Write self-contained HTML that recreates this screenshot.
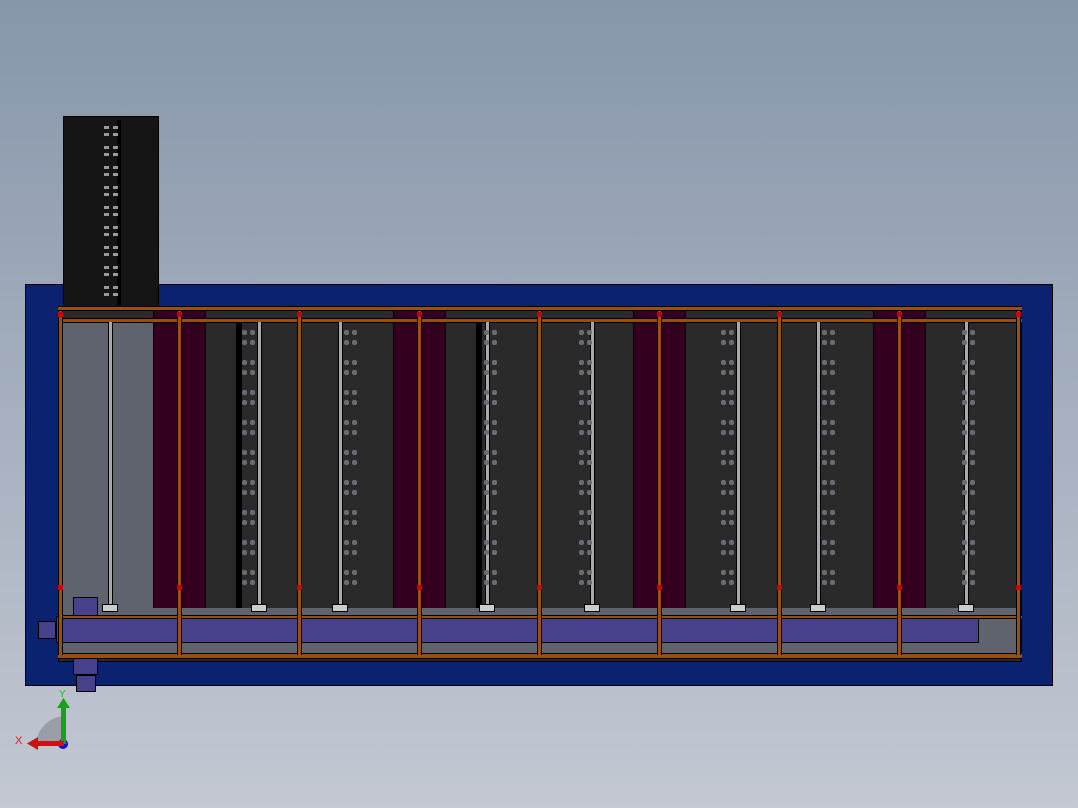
<!DOCTYPE html>
<html><head><meta charset="utf-8"><style>
body{margin:0;width:1078px;height:808px;overflow:hidden;background:linear-gradient(#8796ab,#c3c8d2);position:relative;font-family:"Liberation Sans",sans-serif}
div{position:absolute;box-sizing:border-box}
.post{width:5px;background:#9a4e10;border-left:1px solid #000;border-right:1px solid #000}
.rail{height:5px;background:#9a4e10;border-top:1px solid #000;border-bottom:1px solid #000}
.m{background:#330020;border-left:1px solid #000;border-right:1px solid #000}
.g{width:5px;background:#aaa;border-left:1px solid #000;border-right:1px solid #000}
.d{width:5px;height:5px;background:#6a6c72;border-radius:2px}
</style></head><body>
<div style="left:25px;top:284px;width:1028px;height:402px;background:#0b2270;border:1px solid #000"></div>
<div style="left:63px;top:116px;width:96px;height:192px;background:#151515;border:1px solid #000"></div>
<div style="left:117px;top:120px;width:4px;height:186px;background:#000"></div>
<div style="left:58px;top:306px;width:964px;height:356px;background:#2a2a2a;border:1px solid #000"></div>
<div style="left:60px;top:320px;width:93px;height:296px;background:#5f636d"></div>
<div class="m" style="left:153px;top:310px;width:53px;height:306px"></div>
<div class="m" style="left:393px;top:310px;width:53px;height:306px"></div>
<div class="m" style="left:633px;top:310px;width:53px;height:306px"></div>
<div class="m" style="left:873px;top:310px;width:53px;height:306px"></div>
<div style="left:236px;top:320px;width:6px;height:290px;background:#000"></div>
<div style="left:476px;top:320px;width:6px;height:290px;background:#000"></div>
<div style="left:60px;top:608px;width:960px;height:9px;background:#5f636d"></div>
<div style="left:60px;top:642px;width:960px;height:12px;background:#5f636d"></div>
<div style="left:978px;top:617px;width:42px;height:25px;background:#5f636d"></div>
<div style="left:56px;top:616px;width:923px;height:27px;background:#46418a;border:1px solid #000"></div>
<div style="left:38px;top:621px;width:18px;height:18px;background:#46418a;border:1px solid #000"></div>
<div style="left:73px;top:597px;width:25px;height:22px;background:#46418a;border:1px solid #000"></div>
<div style="left:73px;top:657px;width:25px;height:18px;background:#46418a;border:1px solid #000"></div>
<div style="left:76px;top:675px;width:20px;height:17px;background:#46418a;border:1px solid #000"></div>
<div class="rail" style="left:58px;top:306px;width:964px"></div>
<div class="rail" style="left:58px;top:318px;width:964px"></div>
<div class="rail" style="left:58px;top:615px;width:964px;height:4px"></div>
<div class="rail" style="left:58px;top:653px;width:964px;height:6px"></div>
<div id="c"></div>
<svg style="position:absolute;left:14px;top:686px" width="60" height="70">
<path d="M22 58 A30 30 0 0 1 50 30 L50 58Z" fill="#9a9ea6"/>
<circle cx="49" cy="58" r="5" fill="#1010d0"/>
<rect x="47" y="20" width="5" height="38" fill="#18a018"/>
<path d="M43 22 L49.5 12 L56 22Z" fill="#18a018"/>
<rect x="24" y="55" width="26" height="5" fill="#d01010"/>
<path d="M24 51 L13 57.5 L24 64Z" fill="#d01010"/>
<text x="45" y="11" font-size="10" fill="#20c020" font-family="Liberation Sans">Y</text>
<text x="1" y="58" font-size="11" fill="#d02020" font-family="Liberation Sans">X</text>
</svg>
<script>
var c=document.getElementById('c'),h='';
[59,178,298,418,538,658,778,898,1017].forEach(function(x){h+='<div class="post" style="left:'+(x-1)+'px;top:311px;height:344px"></div>';h+='<div style="left:'+(x-1)+'px;top:312px;width:5px;height:5px;background:#c00"></div><div style="left:'+(x-1)+'px;top:585px;width:5px;height:5px;background:#c00"></div>';});
[110,259,340,487,592,738,818,966].forEach(function(x){h+='<div class="g" style="left:'+(x-2)+'px;top:322px;height:288px"></div>';h+='<div style="left:'+(x-8)+'px;top:604px;width:16px;height:8px;background:#ccc;border:1px solid #000"></div>';});
[248,350,490,585,727,828,968].forEach(function(x){for(var y=330;y<600;y+=30){h+='<div class="d" style="left:'+(x-6)+'px;top:'+y+'px"></div><div class="d" style="left:'+(x+2)+'px;top:'+y+'px"></div><div class="d" style="left:'+(x-6)+'px;top:'+(y+10)+'px"></div><div class="d" style="left:'+(x+2)+'px;top:'+(y+10)+'px"></div>';}});
for(var y=126;y<300;y+=20){h+='<div style="left:104px;top:'+y+'px;width:5px;height:3px;background:#999"></div><div style="left:113px;top:'+y+'px;width:5px;height:3px;background:#999"></div><div style="left:104px;top:'+(y+7)+'px;width:5px;height:3px;background:#999"></div><div style="left:113px;top:'+(y+7)+'px;width:5px;height:3px;background:#999"></div>';}
c.outerHTML=h;
</script>
</body></html>
